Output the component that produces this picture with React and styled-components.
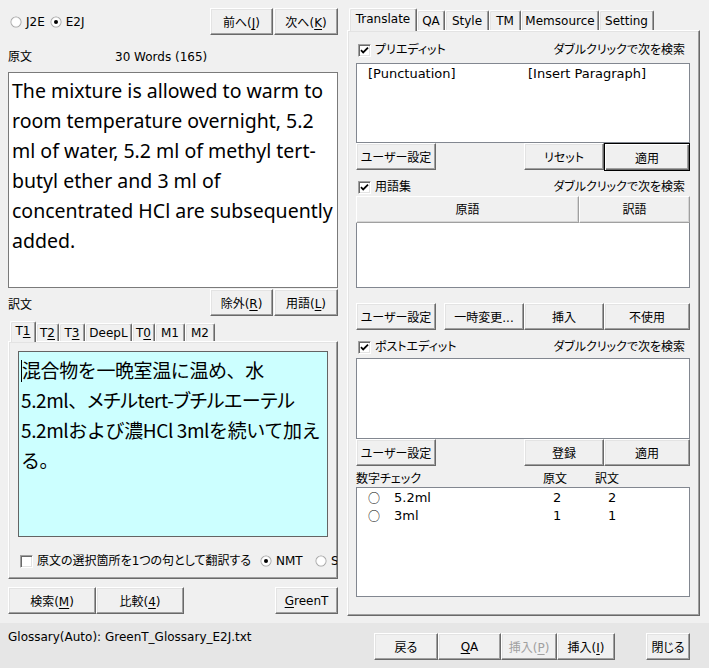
import React from 'react';
import styled, { createGlobalStyle, css } from 'styled-components';

const UI = `"DejaVu Sans", "Noto Sans CJK JP", sans-serif`;

const GlobalStyle = createGlobalStyle`
  html, body { margin: 0; padding: 0; background: #f0f0f0; }
  body { font-family: ${UI}; font-size: 12px; color: #000; }
  *, *::before, *::after { box-sizing: border-box; }
`;

const Window = styled.div`
  width: 709px;
  height: 668px;
  display: flex;
  flex-direction: column;
  background: #f0f0f0;
  overflow: hidden;
  font-family: ${UI};
  font-size: 12px;
  font-feature-settings: "palt";
  line-height: 14px;
  color: #000;
`;

const Main = styled.div`
  height: 623px;
  display: flex;
  gap: 9px;
  padding: 8px 0 0 8px;
`;

const LeftCol = styled.div`
  width: 330px;
  display: flex;
  flex-direction: column;
`;

const RightCol = styled.div`
  width: 353px;
  display: flex;
  flex-direction: column;
`;

const Row = styled.div`
  display: flex;
  align-items: ${p => p.$align || 'center'};
  height: ${p => p.$h}px;
  margin-top: ${p => p.$mt || 0}px;
  gap: ${p => p.$gap || 0}px;
  padding-left: ${p => p.$pl || 0}px;
  padding-right: ${p => p.$pr || 0}px;
  flex-shrink: 0;
`;

const Spacer = styled.div`
  flex: 1;
`;

const Label = styled.span`
  display: inline-block;
  white-space: nowrap;
  width: ${p => (p.$w ? `${p.$w}px` : 'auto')};
  padding-top: ${p => p.$pt || 0}px;
  flex-shrink: 0;
`;

const Button = styled.button`
  width: ${p => p.$w}px;
  height: ${p => p.$h || 27}px;
  flex-shrink: 0;
  margin: 0;
  padding: 0;
  font-family: ${UI};
  font-size: 12px;
  font-feature-settings: "palt";
  color: ${p => (p.disabled ? '#a0a0a0' : '#000')};
  background: #f0f0f0;
  border: 1px solid;
  border-color: #ffffff #696969 #696969 #ffffff;
  box-shadow: inset -1px -1px #a0a0a0, inset 1px 1px #e3e3e3;
  white-space: nowrap;
  ${p => p.$default && css`
    border-color: #000;
    box-shadow: inset 1px 1px #fff, inset -1px -1px #696969, inset -2px -2px #a0a0a0;
  `}
  u { text-underline-offset: 2px; }
`;

const ButtonGroup = styled.div`
  display: flex;
  gap: ${p => p.$gap || 0}px;
  margin-left: ${p => (p.$push ? 'auto' : '0')};
`;

const RadioItem = styled.label`
  display: inline-flex;
  align-items: center;
  gap: 4px;
  width: ${p => (p.$w ? `${p.$w}px` : 'auto')};
  flex-shrink: 0;
  white-space: nowrap;
`;

const CheckItem = styled.label`
  display: inline-flex;
  align-items: center;
  gap: 4px;
  width: ${p => (p.$w ? `${p.$w}px` : 'auto')};
  margin-left: ${p => p.$ml || 0}px;
  flex-shrink: 0;
  white-space: nowrap;
`;

const Box = styled.span`
  width: 13px;
  height: 13px;
  flex-shrink: 0;
  display: inline-flex;
  align-items: center;
  justify-content: center;
  background: #fff;
  border: 1px solid;
  border-color: #a0a0a0 #fff #fff #a0a0a0;
  box-shadow: inset 1px 1px #696969, inset -1px -1px #e3e3e3;
`;

const Radio = ({ checked, children, w }) => (
  <RadioItem $w={w}>
    <svg width="12" height="12" viewBox="0 0 12 12">
      <circle cx="6" cy="6" r="5.5" fill="#a0a0a0" />
      <circle cx="6" cy="6" r="4.5" fill="#fff" stroke="#e8e8e8" strokeWidth="0.6" />
      {checked && <circle cx="6" cy="6" r="2" fill="#000" />}
    </svg>
    <span>{children}</span>
  </RadioItem>
);

const Check = ({ checked, children, w, ml }) => (
  <CheckItem $w={w} $ml={ml}>
    <Box>
      {checked && (
        <svg width="9" height="9" viewBox="0 0 9 9">
          <path d="M1 4.2 L3.2 6.5 L8 1.7" fill="none" stroke="#000" strokeWidth="1.8" />
        </svg>
      )}
    </Box>
    <span>{children}</span>
  </CheckItem>
);

const TextBox = styled.div`
  height: ${p => p.$h}px;
  margin-top: ${p => p.$mt || 0}px;
  flex-shrink: 0;
  background: ${p => p.$bg || '#fff'};
  border: 1px solid ${p => p.$bc || '#7a7a7a'};
  overflow: hidden;
`;

const SourceText = styled.div`
  padding: 3px 3px;
  font-family: "Noto Sans", sans-serif;
  font-size: 19.5px;
  line-height: 30px;
  white-space: nowrap;
  font-feature-settings: normal;
`;

const TargetText = styled.div`
  padding: 3px 3px 0 2px;
  font-family: "Noto Sans CJK JP", sans-serif;
  font-size: 19px;
  line-height: 30px;
  letter-spacing: -0.4px;
  white-space: nowrap;
  font-feature-settings: normal;
`;

const Kata = styled.span`
  font-feature-settings: "palt";
`;

const Caret = styled.span`
  display: inline-block;
  width: 1px;
  height: 22px;
  background: #000;
  vertical-align: -4px;
`;

const Line = styled.div``;

const TabStrip = styled.div`
  display: flex;
  align-items: flex-end;
  height: ${p => p.$h}px;
  margin-top: ${p => p.$mt || 0}px;
  padding-left: 2px;
  flex-shrink: 0;
`;

const Tab = styled.div`
  width: ${p => p.$w}px;
  height: ${p => (p.$active ? p.$h + 3 : p.$h)}px;
  margin-bottom: ${p => (p.$active ? -1 : 0)}px;
  position: relative;
  z-index: ${p => (p.$active ? 2 : 1)};
  display: flex;
  align-items: center;
  justify-content: center;
  padding-bottom: ${p => (p.$active ? 3 : 0)}px;
  background: #f0f0f0;
  border-top: 1px solid #fff;
  border-left: 1px solid #fff;
  border-right: 1px solid #696969;
  box-shadow: inset -1px 0 #a0a0a0, inset 1px 1px #e3e3e3;
  border-radius: 2px 2px 0 0;
  white-space: nowrap;
  u { text-underline-offset: 2px; }
`;

const TabPanel = styled.div`
  height: ${p => p.$h}px;
  flex-shrink: 0;
  display: flex;
  flex-direction: column;
  background: #f0f0f0;
  border-top: 1px solid #fff;
  border-left: 1px solid #fff;
  border-right: 1px solid #696969;
  border-bottom: 1px solid #696969;
  box-shadow: inset -1px -1px #a0a0a0, inset 1px 1px #e3e3e3;
  padding: ${p => p.$pad};
  overflow: hidden;
`;

const ListText = styled.div`
  font-family: "DejaVu Sans", "Noto Sans CJK JP", sans-serif;
  font-size: 13px;
  line-height: 18px;
  font-feature-settings: normal;
`;

const GridRow = styled.div`
  display: grid;
  grid-template-columns: ${p => p.$cols};
  height: ${p => p.$h || 18}px;
  align-items: center;
  white-space: nowrap;
`;

const ListPad = styled.div`
  padding: ${p => p.$pad};
`;

const ListView = styled.div`
  height: ${p => p.$h}px;
  margin-top: ${p => p.$mt || 0}px;
  flex-shrink: 0;
  display: flex;
  flex-direction: column;
`;

const HeaderRow = styled.div`
  display: flex;
  height: 27px;
  flex-shrink: 0;
`;

const HeaderCell = styled.div`
  width: ${p => (p.$w ? `${p.$w}px` : 'auto')};
  flex: ${p => (p.$w ? '0 0 auto' : '1')};
  display: flex;
  align-items: center;
  justify-content: center;
  background: #f0f0f0;
  border: 1px solid;
  border-color: #fff #a0a0a0 #a0a0a0 #fff;
  box-shadow: inset -1px -1px #d5d5d5;
`;

const ListBody = styled.div`
  flex: 1;
  background: #fff;
  border: 1px solid #828790;
  border-top: none;
`;

const StatusBar = styled.div`
  height: 45px;
  display: flex;
  align-items: flex-start;
  background: #e6e6e6;
  padding: 0 19px 0 8px;
`;

const StatusText = styled.span`
  margin-top: 7px;
  white-space: nowrap;
`;

const BottomButtons = styled.div`
  margin-top: 10px;
  margin-left: auto;
  display: flex;
`;

const Gap = styled.div`
  width: ${p => p.$w}px;
  flex-shrink: 0;
`;

const TinyCircle = styled.span`
  font-family: "Noto Sans CJK JP", sans-serif;
  font-size: 12px;
`;

const sourceLines = [
  'The mixture is allowed to warm to',
  'room temperature overnight, 5.2',
  'ml of water, 5.2 ml of methyl tert-',
  'butyl ether and 3 ml of',
  'concentrated HCl are subsequently',
  'added.',
];

const targetLines = [
  '混合物を一晩室温に温め、水',
  '5.2ml、メチルtert-ブチルエーテル',
  '5.2mlおよび濃HCl 3mlを続いて加え',
  'る。',
];

const splitKatakana = line =>
  line.split(/([\u30A0-\u30FF]+)/).map((part, i) =>
    /^[\u30A0-\u30FF]+$/.test(part) ? <Kata key={i}>{part}</Kata> : part
  );

const leftTabs = [
  { label: <>T<u>1</u></>, w: 26, active: true },
  { label: <>T<u>2</u></>, w: 23 },
  { label: <>T<u>3</u></>, w: 26 },
  { label: 'DeepL', w: 47 },
  { label: <>T<u>0</u></>, w: 23 },
  { label: 'M1', w: 30 },
  { label: 'M2', w: 30 },
];

const rightTabs = [
  { label: 'Translate', w: 68, active: true },
  { label: 'QA', w: 28 },
  { label: 'Style', w: 44 },
  { label: 'TM', w: 32 },
  { label: 'Memsource', w: 78 },
  { label: 'Setting', w: 55 },
];

const numbers = [
  { v: '5.2ml', s: '2', t: '2' },
  { v: '3ml', s: '1', t: '1' },
];

export default function App() {
  return (
    <>
      <GlobalStyle />
      <Window>
        <Main>
          <LeftCol>
            <Row $h={27} $pl={2}>
              <ButtonGroup $gap={5}>
                <Radio>J2E</Radio>
                <Radio checked>E2J</Radio>
              </ButtonGroup>
              <ButtonGroup $push $gap={1}>
                <Button $w={63}>前へ(<u>J</u>)</Button>
                <Button $w={64}>次へ(<u>K</u>)</Button>
              </ButtonGroup>
            </Row>
            <Row $h={14} $mt={15}>
              <Label $w={107}>原文</Label>
              <Label>30 Words (165)</Label>
            </Row>
            <TextBox $h={216} $mt={8}>
              <SourceText>
                {sourceLines.map((l, i) => (
                  <Line key={i}>{l}</Line>
                ))}
              </SourceText>
            </TextBox>
            <Row $h={27} $mt={1} $align="flex-start">
              <Label $pt={9}>訳文</Label>
              <ButtonGroup $push $gap={1}>
                <Button $w={63}>除外(<u>R</u>)</Button>
                <Button $w={64}>用語(<u>L</u>)</Button>
              </ButtonGroup>
            </Row>
            <TabStrip $h={20} $mt={5}>
              {leftTabs.map((t, i) => (
                <Tab key={i} $w={t.w} $h={18} $active={t.active}>
                  {t.label}
                </Tab>
              ))}
            </TabStrip>
            <TabPanel $h={238} $pad="9px 9px 0 9px">
              <TextBox $h={186} $bg="#ccffff" $bc="#646464">
                <TargetText>
                  {targetLines.map((l, i) => (
                    <Line key={i}>
                      {i === 0 && <Caret />}
                      {splitKatakana(l)}
                    </Line>
                  ))}
                </TargetText>
              </TextBox>
              <Row $h={14} $mt={17}>
                <Check w={240} ml={2}>原文の選択箇所を1つの句として翻訳する</Check>
                <Radio checked w={55}>NMT</Radio>
                <Radio w={60}>SMT</Radio>
              </Row>
            </TabPanel>
            <Row $h={27} $mt={8}>
              <Button $w={88}>検索(<u>M</u>)</Button>
              <Button $w={88}>比較(<u>4</u>)</Button>
              <ButtonGroup $push>
                <Button $w={63}><u>G</u>reenT</Button>
              </ButtonGroup>
            </Row>
          </LeftCol>

          <RightCol>
            <TabStrip $h={22}>
              {rightTabs.map((t, i) => (
                <Tab key={i} $w={t.w} $h={20} $active={t.active}>
                  {t.label}
                </Tab>
              ))}
            </TabStrip>
            <TabPanel $h={586} $pad="0 9px 0 8px">
              <Row $h={16} $mt={11} $pr={5}>
                <Check checked ml={2}>プリエディット</Check>
                <Spacer />
                <Label>ダブルクリックで次を検索</Label>
              </Row>
              <TextBox $h={80} $mt={5} $bc="#828790">
                <ListText>
                  <ListPad $pad="1px 0 0 11px">
                    <GridRow $cols="160px auto">
                      <span>[Punctuation]</span>
                      <span>[Insert Paragraph]</span>
                    </GridRow>
                  </ListPad>
                </ListText>
              </TextBox>
              <Row $h={28} $align="flex-start">
                <Button $w={80}>ユーザー設定</Button>
                <Spacer />
                <Button $w={80}>リセット</Button>
                <Button $w={86} $h={28} $default>適用</Button>
              </Row>
              <Row $h={16} $mt={8} $pr={5}>
                <Check checked ml={2}>用語集</Check>
                <Spacer />
                <Label>ダブルクリックで次を検索</Label>
              </Row>
              <ListView $h={92} $mt={1}>
                <HeaderRow>
                  <HeaderCell $w={223}>原語</HeaderCell>
                  <HeaderCell>訳語</HeaderCell>
                </HeaderRow>
                <ListBody />
              </ListView>
              <Row $h={28} $mt={15} $align="flex-start">
                <Button $w={80}>ユーザー設定</Button>
                <Gap $w={8} />
                <Button $w={80}>一時変更...</Button>
                <Button $w={80}>挿入</Button>
                <Button $w={86}>不使用</Button>
              </Row>
              <Row $h={16} $mt={8} $pr={5}>
                <Check checked ml={2}>ポストエディット</Check>
                <Spacer />
                <Label>ダブルクリックで次を検索</Label>
              </Row>
              <TextBox $h={81} $mt={3} $bc="#828790" />
              <Row $h={28} $align="flex-start">
                <Button $w={80}>ユーザー設定</Button>
                <Spacer />
                <Button $w={80}>登録</Button>
                <Button $w={86}>適用</Button>
              </Row>
              <Row $h={16} $mt={4}>
                <Label $w={187}>数字チェック</Label>
                <Label $w={52}>原文</Label>
                <Label>訳文</Label>
              </Row>
              <TextBox $h={110} $bc="#828790">
                <ListText>
                  <ListPad $pad="1px 0 0 11px">
                    {numbers.map((n, i) => (
                      <GridRow key={i} $cols="26px 159px 55px auto">
                        <TinyCircle>○</TinyCircle>
                        <span>{n.v}</span>
                        <span>{n.s}</span>
                        <span>{n.t}</span>
                      </GridRow>
                    ))}
                  </ListPad>
                </ListText>
              </TextBox>
            </TabPanel>
          </RightCol>
        </Main>
        <StatusBar>
          <StatusText>Glossary(Auto): GreenT_Glossary_E2J.txt</StatusText>
          <BottomButtons>
            <Button $w={64}>戻る</Button>
            <Button $w={63}><u>Q</u>A</Button>
            <Button $w={56} disabled>挿入(<u>P</u>)</Button>
            <Button $w={58}>挿入(<u>I</u>)</Button>
            <Gap $w={31} />
            <Button $w={44}>閉じる</Button>
          </BottomButtons>
        </StatusBar>
      </Window>
    </>
  );
}
